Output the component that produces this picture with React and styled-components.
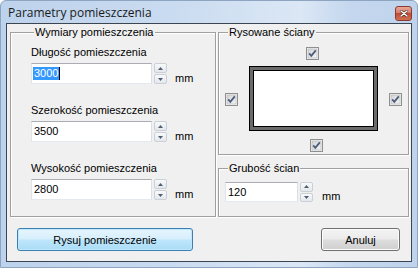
import React from 'react';
import styled, { createGlobalStyle } from 'styled-components';

const GlobalStyle = createGlobalStyle`
  body {
    margin: 0;
    background: #ffffff;
    font-family: "Liberation Sans", Arial, sans-serif;
  }
`

const Window = styled.div`
  width: 418px;
  height: 268px;
  box-sizing: border-box;
  display: flex;
  flex-direction: column;
  background: linear-gradient(90deg, #bdd2ec 0%, #c9dbf0 40%, #dbe7f5 72%, #c4d7ee 84%, #bfd3ec 100%);
  border: 1px solid #8ea5c2;
  border-radius: 6px 6px 0 0;
`

const TitleBar = styled.div`
  height: 22px;
  display: flex;
  align-items: center;
  justify-content: space-between;
  padding: 0 5px 0 7px;
`

const Caption = styled.span`
  font-family: "Open Sans", "Noto Sans", sans-serif;
  font-size: 12px;
  color: #1a1a1a;
  margin-top: 1px;
`

const CloseButton = styled.div`
  width: 17px;
  height: 15px;
  box-sizing: border-box;
  margin-top: 2px;
  display: flex;
  align-items: center;
  justify-content: center;
  border: 1px solid #8a3a30;
  border-radius: 3px;
  background: linear-gradient(#e8a898 0%, #d57c6a 45%, #c04a34 50%, #d0704f 100%);
`

const Client = styled.div`
  flex: 1;
  margin: 0 5px 5px 5px;
  border: 1px solid #3c4652;
  background: #f0f0f0;
  display: flex;
  flex-direction: column;
`

const Panels = styled.div`
  display: flex;
  gap: 2px;
  padding: 2px 2px 0 3px;
`

const Column = styled.div`
  display: flex;
  flex-direction: column;
  gap: 7px;
`

const Group = styled.fieldset`
  margin: 0;
  box-sizing: border-box;
  width: ${p => p.$width}px;
  height: ${p => p.$height}px;
  padding: 7px 6px 0 ${p => p.$indent}px;
  border: 1px solid #a0a0a0;
  box-shadow: inset 1px 1px 0 #ffffff, 1px 1px 0 #ffffff;
`

const Legend = styled.legend`
  font-size: 11px;
  line-height: 13px;
  color: #000;
  padding: 0 1px;
  margin-left: 3px;
  background: #f0f0f0;
`

const FieldBlock = styled.div`
  display: flex;
  flex-direction: column;
  gap: 4px;
  margin-bottom: 20px;
`

const Label = styled.div`
  font-size: 11px;
  line-height: 13px;
  color: #000;
`

const InputRow = styled.div`
  display: flex;
  align-items: flex-end;
`

const TextBox = styled.div`
  width: ${p => p.$width}px;
  height: ${p => p.$height}px;
  box-sizing: border-box;
  display: flex;
  align-items: center;
  padding-left: 1px;
  background: #ffffff;
  border: 1px solid;
  border-color: #abadb3 #dbdfe6 #e3e9ef #e2e3ea;
  font-size: 11px;
`

const Value = styled.span`
  line-height: 13px;
  padding: 0 1px;
  color: ${p => (p.$selected ? '#ffffff' : '#000000')};
  background: ${p => (p.$selected ? '#3399ff' : 'transparent')};
`

const Caret = styled.span`
  width: 1px;
  height: 13px;
  background: #000;
`

const Spinner = styled.div`
  width: 13px;
  height: ${p => p.$height}px;
  margin-left: 2px;
  display: flex;
  flex-direction: column;
  gap: 1px;
`

const SpinButton = styled.div`
  flex: 1;
  display: flex;
  align-items: center;
  justify-content: center;
  box-sizing: border-box;
  border: 1px solid #c9d0d8;
  border-radius: 2px;
  background: linear-gradient(#f8f9fa, #e4e8ec);
`

const Unit = styled.span`
  font-size: 11px;
  line-height: 11px;
  margin-left: ${p => p.$gap}px;
  margin-bottom: 0px;
  color: #000;
`

const WallsGrid = styled.div`
  display: grid;
  grid-template-columns: 13px 129px 13px;
  grid-template-rows: 13px 65px 13px;
  column-gap: 11px;
  row-gap: 7px;
  align-items: center;
`

const Plan = styled.div`
  grid-column: 2;
  grid-row: 2;
  box-sizing: border-box;
  height: 65px;
  border: 1px solid #000;
  box-shadow: inset 0 0 0 3px #6b6b6b, inset 0 0 0 4px #000;
  background: #ffffff;
`

const BoxCell = styled.div`
  grid-column: ${p => p.$col};
  grid-row: ${p => p.$row};
  width: 13px;
  height: 13px;
  margin-left: ${p => p.$shift || 0}px;
`

const ButtonRow = styled.div`
  display: flex;
  justify-content: space-between;
  padding: 11px 11px 0 10px;
`

const Button = styled.div`
  width: ${p => p.$width}px;
  height: 23px;
  box-sizing: border-box;
  display: flex;
  align-items: center;
  justify-content: center;
  font-size: 11px;
  color: #000;
  border-radius: 3px;
  border: 1px solid ${p => (p.$primary ? '#3c7fb1' : '#707070')};
  box-shadow: inset 0 0 0 1px ${p => (p.$primary ? '#bfe7fb' : '#fcfcfc')};
  background: ${p =>
    p.$primary
      ? 'linear-gradient(#e7f5fd 0%, #d6effc 48%, #bfe6fb 52%, #a9dcf7 100%)'
      : 'linear-gradient(#f3f3f3 0%, #ebebeb 48%, #dddddd 52%, #cfcfcf 100%)'};
`

const Arrow = ({ up }) => (
  <svg width="5" height="3" viewBox="0 0 5 3">
    <path d={up ? 'M0 3 L2.5 0 L5 3 Z' : 'M0 0 L2.5 3 L5 0 Z'} fill="#4f5f73" />
  </svg>
)

const Check = () => (
  <svg width="13" height="13" viewBox="0 0 13 13">
    <defs>
      <linearGradient id="cbfill" x1="0" y1="0" x2="1" y2="1">
        <stop offset="0" stopColor="#d4d4d4" />
        <stop offset="1" stopColor="#f4f4f4" />
      </linearGradient>
    </defs>
    <rect x="0.5" y="0.5" width="12" height="12" fill="#f4f4f4" stroke="#8f8f8f" />
    <rect x="2" y="2" width="9" height="9" fill="url(#cbfill)" stroke="#aeb3b9" strokeWidth="0.6" />
    <path d="M3.2 6.4 L5.3 8.8 L9.8 3.4" fill="none" stroke="#4a5d7e" strokeWidth="1.8" />
  </svg>
)

const Field = ({ width, height, value, selected, gap }) => (
  <InputRow>
    <TextBox $width={width} $height={height}>
      <Value $selected={selected}>{value}</Value>
      {selected && <Caret />}
    </TextBox>
    <Spinner $height={height}>
      <SpinButton><Arrow up /></SpinButton>
      <SpinButton><Arrow /></SpinButton>
    </Spinner>
    <Unit $gap={gap}>mm</Unit>
  </InputRow>
)

const dims = [
  { label: 'Długość pomieszczenia', value: '3000', selected: true },
  { label: 'Szerokość pomieszczenia', value: '3500' },
  { label: 'Wysokość pomieszczenia', value: '2800' },
]

const App = () => {
  return (
    <>
      <GlobalStyle />
      <Window>
        <TitleBar>
          <Caption>Parametry pomieszczenia</Caption>
          <CloseButton>
            <svg width="8" height="7" viewBox="0 0 8 7">
              <path d="M1 1 L7 6 M7 1 L1 6" stroke="#4a1a14" strokeWidth="2.6" strokeLinecap="round" />
              <path d="M1 1 L7 6 M7 1 L1 6" stroke="#ffffff" strokeWidth="1.5" strokeLinecap="round" />
            </svg>
          </CloseButton>
        </TitleBar>
        <Client>
          <Panels>
            <Group $width={206} $height={191} $indent={20}>
              <Legend>Wymiary pomieszczenia</Legend>
              {dims.map(d => (
                <FieldBlock key={d.label}>
                  <Label>{d.label}</Label>
                  <Field width={121} height={21} value={d.value} selected={d.selected} gap={8} />
                </FieldBlock>
              ))}
            </Group>
            <Column>
              <Group $width={191} $height={129} $indent={6}>
                <Legend>Rysowane ściany</Legend>
                <WallsGrid>
                  <BoxCell $col={2} $row={1} $shift={57}><Check /></BoxCell>
                  <BoxCell $col={1} $row={2}><Check /></BoxCell>
                  <Plan />
                  <BoxCell $col={3} $row={2}><Check /></BoxCell>
                  <BoxCell $col={2} $row={3} $shift={61}><Check /></BoxCell>
                </WallsGrid>
              </Group>
              <Group $width={191} $height={55} $indent={6}>
                <Legend>Grubość ścian</Legend>
                <Field width={73} height={20} value="120" gap={9} />
              </Group>
            </Column>
          </Panels>
          <ButtonRow>
            <Button $primary $width={176}>Rysuj pomieszczenie</Button>
            <Button $width={79}>Anuluj</Button>
          </ButtonRow>
        </Client>
      </Window>
    </>
  )
}

export default App
